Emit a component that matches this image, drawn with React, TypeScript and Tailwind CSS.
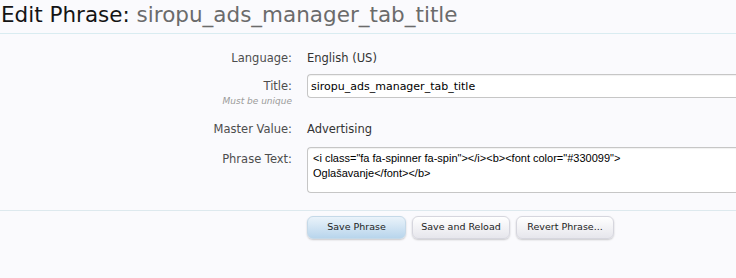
export default function App() {
  const font = "font-['DejaVu_Sans',Tahoma,sans-serif]";
  return (
    <div className={`w-[736px] h-[278px] overflow-hidden bg-[#fafafd] ${font}`}>
      <h1 className="h-[34px] border-b border-[#d9ecf1] pl-[1px] pt-[3px] text-[21.5px] leading-[24px] font-normal whitespace-nowrap">
        <span className="text-[#141414]">Edit Phrase: </span>
        <span className="text-[#6b6b6b]">siropu_ads_manager_tab_title</span>
      </h1>

      <form className="border-b border-[#dde9ee] pt-[13px] pb-[17px] text-[11.5px]">
        <div className="mt-[2px] flex h-[20px] items-center">
          <div className="w-[292px] text-right text-[#4d4d4d]">Language:</div>
          <div className="ml-[15px] text-[#333]">English (US)</div>
        </div>

        <div className="mt-[5px] flex items-start">
          <div className="w-[292px] text-right">
            <div className="leading-[24px] text-[#4d4d4d]">Title:</div>
            <div className="-mt-[2px] text-[9px] italic leading-[10px] text-[#9a9a9a]">Must be unique</div>
          </div>
          <input
            defaultValue="siropu_ads_manager_tab_title"
            className="ml-[15px] h-[24px] flex-1 rounded-l-[4px] border border-r-0 border-[#c6c6c6] bg-white px-[3px] text-[11px] text-black shadow-[inset_0_1px_1px_rgba(0,0,0,0.06)] outline-none"
          />
        </div>

        <div className="mt-[14px] flex h-[20px] items-center">
          <div className="w-[292px] text-right text-[#4d4d4d]">Master Value:</div>
          <div className="ml-[15px] text-[#333]">Advertising</div>
        </div>

        <div className="mt-[7px] flex items-start">
          <div className="w-[292px] text-right leading-[24px] text-[#4d4d4d]">Phrase Text:</div>
          <textarea
            defaultValue={'<i class="fa fa-spinner fa-spin"></i><b><font color="#330099">\nOglašavanje</font></b>'}
            className="ml-[15px] h-[46px] flex-1 resize-none rounded-l-[4px] border border-r-0 border-[#c6c6c6] bg-white px-[5px] pt-[3px] font-['Liberation_Sans',Arial,sans-serif] text-[11px] leading-[15px] text-black shadow-[inset_0_1px_1px_rgba(0,0,0,0.06)] outline-none"
          />
        </div>
      </form>

      <div className="ml-[307px] mt-[5px] flex gap-[6px] text-[9.5px] text-[#222]">
        <button className="h-[23px] w-[99px] rounded-[6px] border border-[#c5d9e8] bg-gradient-to-b from-[#eaf3fa] to-[#b8d5ec] shadow-[0_1px_2px_rgba(0,0,0,0.2)]">
          Save Phrase
        </button>
        <button className="h-[23px] w-[98px] rounded-[6px] border border-[#d6d6de] bg-gradient-to-b from-white to-[#e6e6ec] shadow-[0_1px_2px_rgba(0,0,0,0.2)]">
          Save and Reload
        </button>
        <button className="h-[23px] w-[98px] rounded-[6px] border border-[#d6d6de] bg-gradient-to-b from-white to-[#e6e6ec] shadow-[0_1px_2px_rgba(0,0,0,0.2)]">
          Revert Phrase...
        </button>
      </div>
    </div>
  );
}
